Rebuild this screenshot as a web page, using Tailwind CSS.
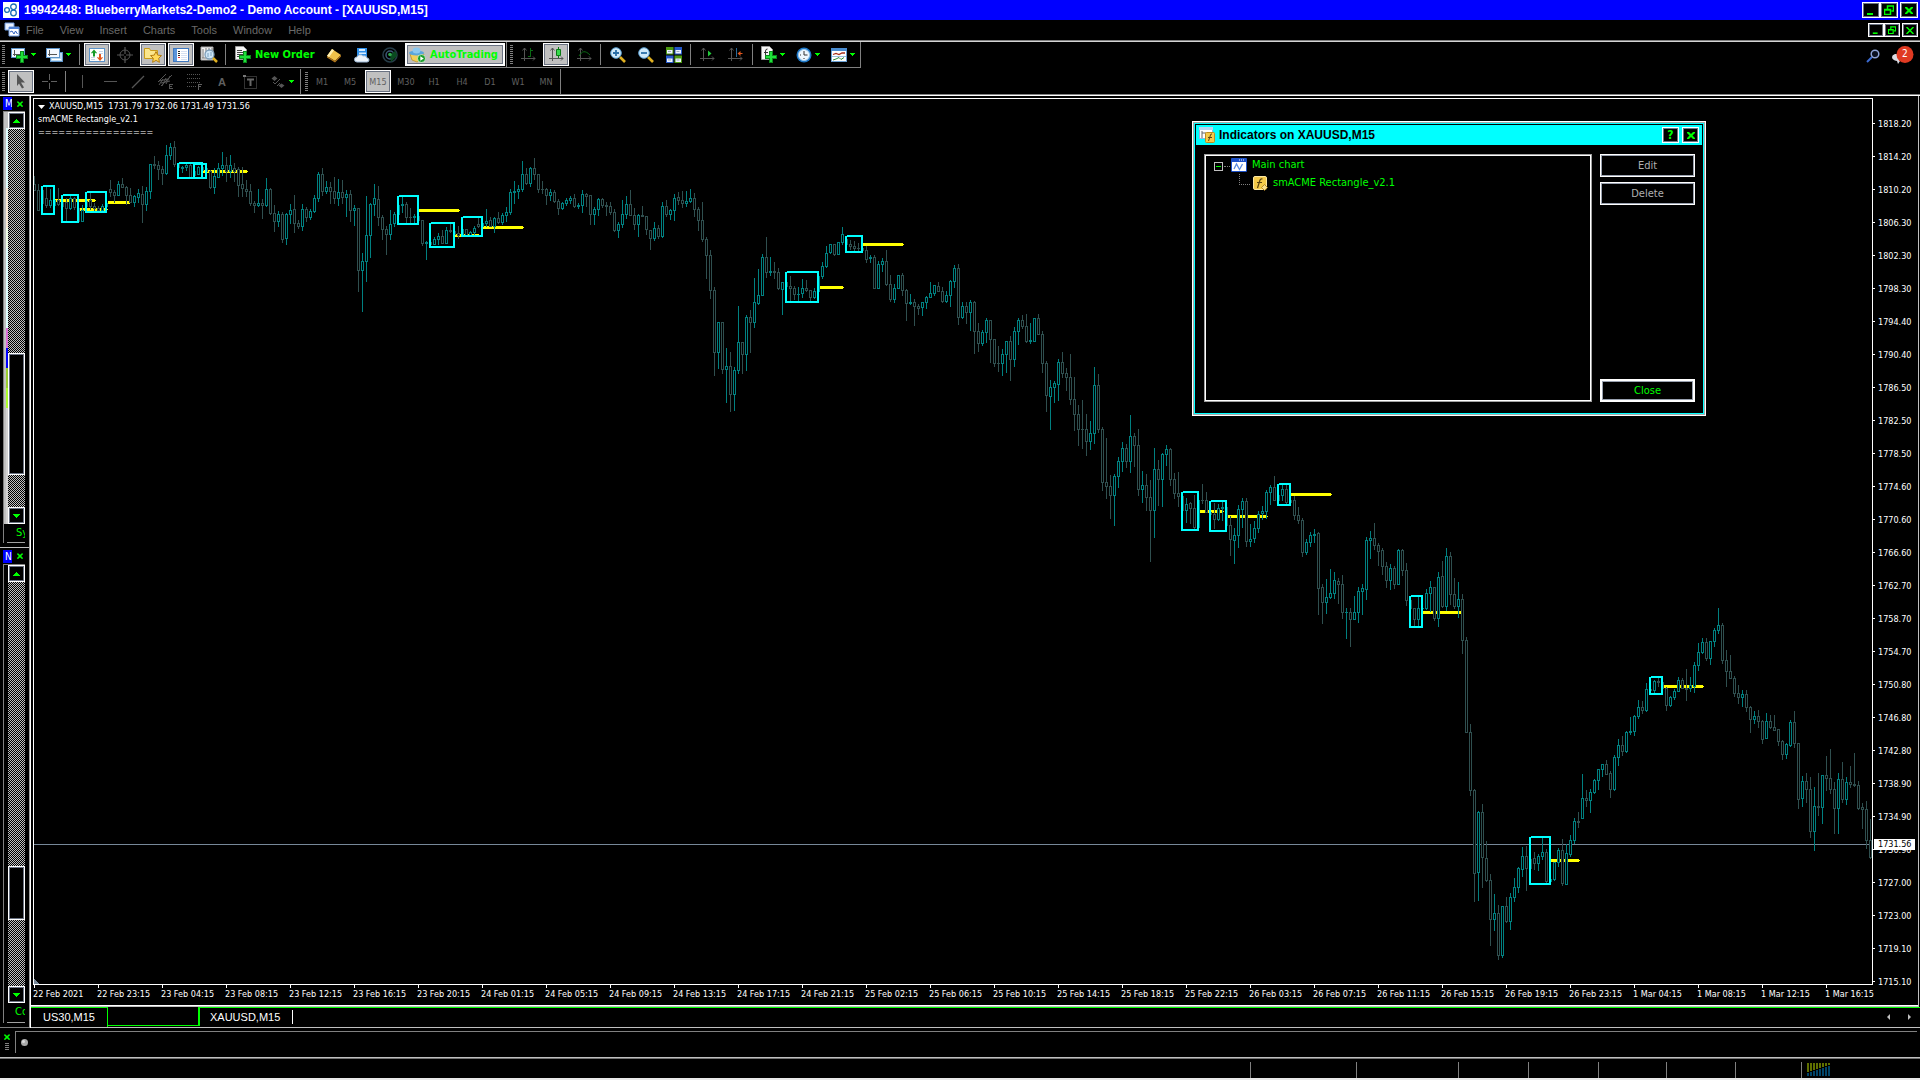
<!DOCTYPE html>
<html lang="en">
<head>
    <meta charset="UTF-8">
    <meta name="viewport" content="width=device-width, initial-scale=1.0">
    <title>19942448: BlueberryMarkets2-Demo2 - Demo Account - [XAUUSD,M15]</title>
    <script src="https://cdn.jsdelivr.net/npm/@tailwindcss/browser@4"></script>
</head>
<body class="relative h-screen flex flex-col overflow-hidden bg-black text-white font-['DejaVu_Sans_Condensed','DejaVu_Sans',sans-serif] text-[9px] leading-3">

    <!-- shared glyphs -->
    <svg class="hidden">
        <symbol id="g-drop" viewBox="0 0 5 3"><path d="M0 0h5v1h-1v1h-1v1h-1v-1h-1v-1h-1z" fill="#00ff00"/></symbol>
        <symbol id="g-up" viewBox="0 0 7 4"><path d="M3 0h1v1h1v1h1v1h1v1h-7v-1h1v-1h1v-1h1z" fill="#00ff00"/></symbol>
        <symbol id="g-down" viewBox="0 0 7 4"><path d="M0 0h7v1h-1v1h-1v1h-1v1h-1v-1h-1v-1h-1v-1h-1z" fill="#00ff00"/></symbol>
        <symbol id="g-x" viewBox="0 0 8 7"><path d="M0 0h2l2 2 2-2h2v1L5.500 3.500 8 6v1h-2l-2-2-2 2h-2v-1l2.500-2.500L0 1z" fill="#00ff00"/></symbol>
        <symbol id="g-min" viewBox="0 0 10 10"><path d="M1 8h6v2h-6z" fill="#00ff00"/></symbol>
        <symbol id="g-restore" viewBox="0 0 10 10"><path d="M3.500 4v-3h6v5h-2M3 1h7M.5 4.500h6v5h-6zM0 5h7" fill="none" stroke="#00ff00" stroke-width="1.500"/></symbol>
        <symbol id="g-axes" viewBox="0 0 15 15"><path d="M3.500 1v13M0 11.500h14M1.500 3.500l2-2.500 2 2.500M12 9.500l2 2-2 2" fill="none" stroke="#555" stroke-width="1"/></symbol>
        <symbol id="g-plus" viewBox="0 0 12 12"><path d="M4 0h4v4h4v4h-4v4h-4v-4h-4v-4h4z" fill="#0a8a1a"/><path d="M5 1h2v4h4v2h-4v4h-2v-4h-4v-2h4z" fill="#1fe03a"/></symbol>
    </svg>

    <header class="h-5 bg-[#0000ff] flex items-center px-[2px]">
        <svg class="w-4 h-4 mx-px" viewBox="0 0 16 16"><rect width="16" height="16" fill="#fff"/><g fill="none" stroke="#1d6fb8" stroke-width="1.300"><circle cx="10.500" cy="4.800" r="2.800"/><circle cx="4" cy="8" r="2.400"/><circle cx="10.500" cy="11" r="2.800"/></g></svg>
        <h1 class="ml-1 flex-1 font-['Liberation_Sans',sans-serif] font-bold text-[12px] leading-4">19942448: BlueberryMarkets2-Demo2 - Demo Account - [XAUUSD,M15]</h1>
        <button aria-label="Minimize" class="w-[18px] h-4 bg-black border border-white outline-1 -outline-offset-2 outline-gray-500 flex items-center justify-center"><svg class="w-[10px] h-[10px]"><use href="#g-min"/></svg></button>
        <button aria-label="Restore" class="w-[18px] h-4 bg-black border border-white outline-1 -outline-offset-2 outline-gray-500 flex items-center justify-center"><svg class="w-[10px] h-[10px]"><use href="#g-restore"/></svg></button>
        <button aria-label="Close" class="ml-[2px] w-[18px] h-4 bg-black border border-white outline-1 -outline-offset-2 outline-gray-500 flex items-center justify-center"><svg class="w-2 h-[7px]"><use href="#g-x"/></svg></button>
    </header>

    <nav class="h-5 flex items-center px-[2px] text-[#696969] font-['Liberation_Sans',sans-serif] text-[11px] leading-4">
        <svg class="w-4 h-4 ml-[2px]" viewBox="0 0 16 16"><path d="M1 1h9v7h-9z" fill="#eaf2ff" stroke="#6f9be0"/><path d="M5 5h10v9h-10z" fill="#fff" stroke="#6f9be0"/><path d="M5 5h10v2h-10z" fill="#4f83d8"/><path d="M6 10l2-1 2 3 1.500-3 2 3" fill="none" stroke="#2f62c0"/></svg>
        <a href="#" class="px-2 ml-[-2px]">File</a>
        <a href="#" class="px-2">View</a>
        <a href="#" class="px-2">Insert</a>
        <a href="#" class="px-2">Charts</a>
        <a href="#" class="px-2">Tools</a>
        <a href="#" class="px-2">Window</a>
        <a href="#" class="px-2">Help</a>
        <div class="ml-auto flex">
            <button aria-label="Minimize chart" class="w-4 h-[14px] bg-black border border-white outline-1 -outline-offset-2 outline-gray-500 flex items-center justify-center"><svg class="w-2 h-2"><use href="#g-min"/></svg></button>
            <button aria-label="Restore chart" class="w-4 h-[14px] bg-black border border-white outline-1 -outline-offset-2 outline-gray-500 flex items-center justify-center"><svg class="w-2 h-2"><use href="#g-restore"/></svg></button>
            <button aria-label="Close chart" class="ml-[2px] w-4 h-[14px] bg-black border border-white outline-1 -outline-offset-2 outline-gray-500 flex items-center justify-center"><svg class="w-2 h-[7px]" viewBox="0 0 8 7"><path d="M0.500 0l7 7M7.500 0l-7 7" stroke="#00ff00" stroke-width="1.500"/></svg></button>
        </div>
    </nav>

    <div class="border-t border-[#808080]">
        <div class="border-t border-[#d4d4d4] flex justify-between h-7">
            <!-- standard toolbar -->
            <div class="h-[26px] border-b border-r border-[#808080] flex items-center">
                <i class="w-[3px] h-5 ml-[2px] mr-[3px] bg-[repeating-linear-gradient(#808080_0_1px,#000_1px_2px)]"></i>
                <button aria-label="New chart" class="w-[35px] flex items-center gap-[3px] pl-[3px]">
                    <svg class="w-[17px] h-4" viewBox="0 0 17 16"><rect x=".5" y="1.500" width="13" height="9" fill="#f4f8ff" stroke="#5c93c9"/><path d="M3.500 3v6M2 7.500h9" stroke="#555"/><use href="#g-plus" x="5" y="4" width="12" height="12"/></svg>
                    <svg class="w-[5px] h-[3px]"><use href="#g-drop"/></svg>
                </button>
                <button aria-label="Profiles" class="w-[35px] flex items-center gap-[3px] pl-[3px]">
                    <svg class="w-[17px] h-4" viewBox="0 0 17 16"><rect x="4.500" y="5.500" width="12" height="9" fill="#bcd8ef" stroke="#5c93c9"/><rect x=".5" y="1.500" width="13" height="9" fill="#f4f8ff" stroke="#5c93c9"/><path d="M3.500 3v6M2 7.500h9" stroke="#555"/><path d="M6 12.500h9" stroke="#fff"/></svg>
                    <svg class="w-[5px] h-[3px]"><use href="#g-drop"/></svg>
                </button>
                <i class="w-px h-[21px] ml-px mr-[3px] bg-[#808080]"></i>
                <button aria-label="Market Watch" class="w-[26px] h-[23px] mx-px border border-white outline-1 -outline-offset-2 outline-gray-500 bg-[#c0c0c0] flex items-center justify-center">
                    <svg class="w-4 h-4" viewBox="0 0 16 16"><rect x=".5" y="1.500" width="15" height="13" fill="#fff" stroke="#5c93c9"/><path d="M10 4.500h4M10 6.500h4M2 10.500h4M2 12.500h4" stroke="#c8d4e8"/><path d="M5 2.500l3 3.500-1 .5-1-1v4h-2v-4l-1 1-1-.5z" fill="#159a28"/><path d="M11 14l3-3.500-1-.5-1 1v-4h-2v4l-1-1-1 .5z" fill="#e2561c"/></svg>
                </button>
                <button aria-label="Data Window" class="w-[26px] h-[23px] mx-px flex items-center justify-center">
                    <svg class="w-4 h-4" viewBox="0 0 16 16" fill="none" stroke="#555"><circle cx="8" cy="8" r="5"/><path d="M8 0v7M8 9v7M0 8h7M9 8h7" stroke-width="1.200"/></svg>
                </button>
                <button aria-label="Navigator" class="w-[26px] h-[23px] mx-px border border-white outline-1 -outline-offset-2 outline-gray-500 bg-[#c0c0c0] flex items-center justify-center">
                    <svg class="w-[18px] h-4" viewBox="0 0 18 16"><path d="M.5 1.500h5l1 2h7v8h-13z" fill="#fbe68c" stroke="#c99b1a"/><path d="M12 4.500l1.700 3.600 3.800.5-2.800 2.700.7 4-3.400-1.900-3.400 1.900.7-4-2.800-2.700 3.800-.5z" fill="#ffd95a" stroke="#b57d10"/></svg>
                </button>
                <button aria-label="Terminal" class="w-[26px] h-[23px] mx-px border border-white outline-1 -outline-offset-2 outline-gray-500 bg-[#c0c0c0] flex items-center justify-center">
                    <svg class="w-4 h-4" viewBox="0 0 16 16"><rect x=".5" y="1.500" width="15" height="13" fill="#fff" stroke="#3f78c0"/><path d="M1 2h3v12h-3z" fill="#5a94da"/><path d="M8 4.500h6M8 6.500h6M8 8.500h6M8 10.500h6M8 12.500h6" stroke="#d4e0f2"/><path d="M5 4h2v1h-2zM5 6h2v1h-2zM5 8h2v1h-2z" fill="#222"/><path d="M5 10h2v1h-2z" fill="#d33"/></svg>
                </button>
                <button aria-label="Strategy Tester" class="w-[26px] h-[23px] mx-px flex items-center justify-center">
                    <svg class="w-[18px] h-[17px]" viewBox="0 0 18 17"><path d="M1 1h12v13h-12z" fill="#f4f4f4" stroke="#aaa"/><path d="M3 3v9M6 2v4M9 2v3M12 2v3M2 12h5" stroke="#777"/><circle cx="9.500" cy="8.500" r="4.500" fill="#cfe6f7" stroke="#7d9db8" stroke-width="1.300"/><path d="M8 7v4M11 6v4" stroke="#7aa2c0"/><path d="M13 12l4 4" stroke="#e0b020" stroke-width="2.500"/></svg>
                </button>
                <i class="w-px h-[21px] mx-[2px] bg-[#808080]"></i>
                <button class="w-[92px] h-[23px] pl-[7px] flex items-center gap-1 text-[#00ff00] font-bold text-[11px] whitespace-nowrap">
                    <svg class="w-4 h-[17px] shrink-0" viewBox="0 0 16 17"><path d="M.5.5h8l3 3v10h-11z" fill="#f6f6f6" stroke="#999"/><path d="M2 4.500h5M2 6.500h7M2 8.500h7M2 10.500h5" stroke="#444"/><use href="#g-plus" x="4" y="5" width="12" height="12"/></svg>
                    New Order
                </button>
                <button aria-label="MetaEditor" class="w-[26px] h-[23px] mx-px flex items-center justify-center">
                    <svg class="w-4 h-4" viewBox="0 0 16 16"><path d="M1 9l5-7 9 6-6 6z" fill="#f0c24a"/><path d="M1 9l5-7 2 1.300-5 7z" fill="#fff0b0"/><path d="M1 9l8 5 6-6v1.500l-6 6-8-5z" fill="#b4761a"/></svg>
                </button>
                <button aria-label="Market" class="w-[26px] h-[23px] mx-px flex items-center justify-center">
                    <svg class="w-4 h-4" viewBox="0 0 16 16"><path d="M3 1h10v9h-10z" fill="#2f8fe8"/><path d="M5 2h6v2h-6zM5 5.500h7v1.500h-7z" fill="#d7ecff"/><path d="M3 15a2.500 2.500 0 0 1 0-5 3.500 3.500 0 0 1 6-1 3 3 0 0 1 4 2 2 2 0 0 1 0 4z" fill="#eef4fb" stroke="#9ab6d4"/></svg>
                </button>
                <button aria-label="Signals" class="w-[26px] h-[23px] mx-px flex items-center justify-center">
                    <svg class="w-4 h-4" viewBox="0 0 16 16" fill="none"><circle cx="8" cy="8" r="7" stroke="#263c48" stroke-width="1.500"/><circle cx="8" cy="8" r="4" stroke="#3c5878" stroke-width="1.500"/><path d="M8 8l5-4q2 2 2 5l-6 6z" fill="#0b4a20"/><circle cx="8" cy="7.500" r="1.800" fill="#2ea64c"/></svg>
                </button>
                <button class="w-[100px] h-[23px] mx-px pl-[2px] border-2 border-white outline-1 -outline-offset-3 outline-gray-500 bg-[#c0c0c0] flex items-center gap-1 text-[#00ff00] text-[11px] font-bold whitespace-nowrap">
                    <svg class="w-[17px] h-4 shrink-0" viewBox="0 0 17 16"><path d="M1 7h14l-3 6-4 2-5-2z" fill="#f3cf5a" stroke="#b98c1a" stroke-width=".7"/><ellipse cx="7.500" cy="6" rx="7.500" ry="2.500" fill="#5aa6dc"/><ellipse cx="7.500" cy="3.500" rx="4" ry="3" fill="#8cc8f0"/><circle cx="12.500" cy="11.500" r="4" fill="#1ba02c" stroke="#fff" stroke-width=".6"/><path d="M11.300 9.300l3.500 2.200-3.500 2.200z" fill="#fff"/></svg>
                    AutoTrading
                </button>
                <i class="w-px h-[25px] bg-[#808080]"></i>
                <i class="w-[3px] h-5 ml-[3px] mr-px bg-[repeating-linear-gradient(#808080_0_1px,#000_1px_2px)]"></i>
                <button aria-label="Bar chart" class="w-[26px] h-[23px] mx-px flex items-center justify-center">
                    <svg class="w-[15px] h-[15px]" viewBox="0 0 15 15"><use href="#g-axes"/><path d="M9.500 1v9M7 9.500h2M10 3.500h2" stroke="#0a6a14" fill="none"/></svg>
                </button>
                <button aria-label="Candlesticks" class="w-[26px] h-[23px] mx-px border border-white outline-1 -outline-offset-2 outline-gray-500 bg-[#c0c0c0] flex items-center justify-center">
                    <svg class="w-[15px] h-[15px]" viewBox="0 0 15 15"><use href="#g-axes"/><path d="M9.500 0v11" stroke="#0a7a14"/><path d="M7.500 2.500h4v6h-4z" fill="#35d84a" stroke="#0a7a14"/></svg>
                </button>
                <button aria-label="Line chart" class="w-[26px] h-[23px] mx-px flex items-center justify-center">
                    <svg class="w-[15px] h-[15px]" viewBox="0 0 15 15"><use href="#g-axes"/><path d="M2 9c3-5 6-6 11-1" stroke="#0a6a14" fill="none"/></svg>
                </button>
                <i class="w-px h-[21px] ml-[2px] mr-[3px] bg-[#808080]"></i>
                <button aria-label="Zoom in" class="w-[26px] h-[23px] mx-px flex items-center justify-center">
                    <svg class="w-4 h-4" viewBox="0 0 16 16"><path d="M10 10l5 5" stroke="#e0b020" stroke-width="2.600"/><circle cx="6" cy="6" r="5.300" fill="#cfe9fa" stroke="#5da2d4"/><path d="M6 3v6M3 6h6" stroke="#2a6fa8" stroke-width="1.800"/></svg>
                </button>
                <button aria-label="Zoom out" class="w-[26px] h-[23px] mx-px flex items-center justify-center">
                    <svg class="w-4 h-4" viewBox="0 0 16 16"><path d="M10 10l5 5" stroke="#e0b020" stroke-width="2.600"/><circle cx="6" cy="6" r="5.300" fill="#cfe9fa" stroke="#5da2d4"/><path d="M3 6h6" stroke="#2a6fa8" stroke-width="1.800"/></svg>
                </button>
                <button aria-label="Tile windows" class="w-[26px] h-[23px] mx-px flex items-center justify-center">
                    <svg class="w-4 h-4" viewBox="0 0 16 16"><path d="M0 0h7.500v7.500h-7.500zM8.500 8.500h7.500v7.500h-7.500z" fill="#4a9a10"/><path d="M8.500 0h7.500v7.500h-7.500zM0 8.500h7.500v7.500h-7.500z" fill="#2458c8"/><path d="M1 3h5.500v3.500h-5.500zM9.500 3h5.500v3.500h-5.500zM1 11.500h5.500v3.500h-5.500zM9.500 11.500h5.500v3.500h-5.500z" fill="#eef4ff"/><path d="M2 4.500h3M10.500 4.500h3M2 13h3M10.500 13h3" stroke="#9ab"/></svg>
                </button>
                <i class="w-px h-[21px] mx-[2px] bg-[#808080]"></i>
                <button aria-label="Auto scroll" class="w-[26px] h-[23px] mx-px flex items-center justify-center">
                    <svg class="w-[15px] h-[15px]" viewBox="0 0 15 15"><use href="#g-axes"/><path d="M8 3.500l3.500 3-3.500 3z" fill="#22c83a"/></svg>
                </button>
                <button aria-label="Chart shift" class="w-[26px] h-[23px] mx-px flex items-center justify-center">
                    <svg class="w-[15px] h-[15px]" viewBox="0 0 15 15"><use href="#g-axes"/><path d="M8.500 1v9" stroke="#2a6a9a"/><path d="M9.500 6.500l3-2.500v2h2v1h-2v2z" fill="#e2561c"/></svg>
                </button>
                <i class="w-px h-[21px] ml-[3px] mr-[5px] bg-[#808080]"></i>
                <button aria-label="Indicators" class="w-[35px] flex items-center gap-[3px] pl-[3px]">
                    <svg class="w-4 h-[17px]" viewBox="0 0 16 17"><path d="M.5.5h8l3 3v10h-11z" fill="#f6f6f6" stroke="#999"/><path d="M4.500 11v-6q0-2 2-2M3 6.500h4" fill="none" stroke="#333"/><use href="#g-plus" x="4" y="5" width="12" height="12"/></svg>
                    <svg class="w-[5px] h-[3px]"><use href="#g-drop"/></svg>
                </button>
                <button aria-label="Periods" class="w-[35px] flex items-center gap-[3px] pl-[3px]">
                    <svg class="w-4 h-4" viewBox="0 0 16 16"><circle cx="8" cy="8" r="7.500" fill="#1e78c8"/><circle cx="8" cy="8" r="5.600" fill="#eef6fc" stroke="#9cc8ec"/><path d="M8 4v4h3.500M4 8h1M8 11v1" stroke="#333" fill="none"/></svg>
                    <svg class="w-[5px] h-[3px]"><use href="#g-drop"/></svg>
                </button>
                <button aria-label="Templates" class="w-[32px] flex items-center gap-[3px] pl-[3px]">
                    <svg class="w-4 h-[14px]" viewBox="0 0 16 14"><rect x=".5" y=".5" width="15" height="13" fill="#fff" stroke="#6aa0d4"/><path d="M0 0h16v3h-16z" fill="#4a8cd0"/><path d="M2 6.500l3-1 3 1 3-1.500h3" stroke="#a8301c" fill="none" stroke-width="1.300"/><path d="M1 8.500h14" stroke="#9cc0e0"/><path d="M2 12l3-1 3-1.500 2 2 3-2" stroke="#2a8a34" fill="none"/></svg>
                    <svg class="w-[5px] h-[3px]"><use href="#g-drop"/></svg>
                </button>
            </div>
            <div class="flex items-center gap-[10px] pr-[6px]">
                <button aria-label="Search"><svg class="w-[14px] h-[14px]" viewBox="0 0 14 14"><path d="M1 13l5-5" stroke="#3a6ad0" stroke-width="2"/><circle cx="9" cy="5" r="3.800" fill="#0a1020" stroke="#8ea4d8" stroke-width="1.500"/></svg></button>
                <button aria-label="Notifications" class="relative w-6 h-[18px] mb-[2px]">
                    <svg class="w-6 h-[18px]" viewBox="0 0 24 18"><path d="M5 8h8v7h-3l-2 3-1-3q-5-1-5-4 0-2 3-3z" fill="#dcdce4"/><circle cx="15" cy="8.500" r="8.500" fill="#e03a22"/></svg>
                    <span class="absolute left-[12px] top-[2px] text-[10px]">2</span>
                </button>
            </div>
        </div>

        <!-- line studies and timeframes -->
        <div class="h-[27px] border-b border-white flex items-stretch text-[#606060]">
            <div class="flex items-center h-[26px] border-b border-[#808080] w-full">
                <i class="w-[3px] h-5 ml-[2px] mr-[2px] bg-[repeating-linear-gradient(#808080_0_1px,#000_1px_2px)]"></i>
                <button aria-label="Cursor" class="w-[26px] h-[23px] mx-px border border-white outline-1 -outline-offset-2 outline-gray-500 bg-[#c0c0c0] flex items-center justify-center"><svg class="w-[10px] h-[15px]" viewBox="0 0 10 15"><path d="M1 0l8 8.500h-4l3 5-2 1-3-5-2 2.500z" fill="#555"/></svg></button>
                <button aria-label="Crosshair" class="w-[26px] h-[23px] mx-px flex items-center justify-center"><svg class="w-[15px] h-[15px]" viewBox="0 0 15 15"><path d="M7.500 0v6M7.500 9v6M0 7.500h6M9 7.500h6" stroke="#606060"/></svg></button>
                <i class="w-px h-[21px] ml-[2px] mr-[2px] bg-[#808080]"></i>
                <button aria-label="Vertical line" class="w-[26px] h-[23px] mx-px flex items-center justify-center"><svg class="w-[15px] h-[15px]" viewBox="0 0 15 15"><path d="M7.500 1v13" stroke="#555"/></svg></button>
                <button aria-label="Horizontal line" class="w-[26px] h-[23px] mx-px flex items-center justify-center"><svg class="w-[15px] h-[15px]" viewBox="0 0 15 15"><path d="M1 7.500h13" stroke="#555"/></svg></button>
                <button aria-label="Trendline" class="w-[26px] h-[23px] mx-px flex items-center justify-center"><svg class="w-[15px] h-[15px]" viewBox="0 0 15 15"><path d="M1 14l12-12" stroke="#555" stroke-width="1.200"/></svg></button>
                <button aria-label="Equidistant channel" class="w-[26px] h-[23px] mx-px flex items-center justify-center"><svg class="w-4 h-[17px]" viewBox="0 0 16 17"><path d="M0 9l8-8M3 13l11-11M1 12l4-6M4 13l4-8M8 11l4-8M1 8l9-2M3 10l9-2M11.500 11v5M11 11.500h4M11 13.500h3M11 15.500h4" stroke="#555" fill="none"/></svg></button>
                <button aria-label="Fibonacci retracement" class="w-[26px] h-[23px] mx-px flex items-center justify-center"><svg class="w-4 h-[17px]" viewBox="0 0 16 17"><path d="M1 1.500h14M1 5.500h14M1 9.500h14M1 13.500h9" stroke="#555" stroke-dasharray="1 1"/><path d="M12.500 11v6M12 11.500h4M12 13.500h3" stroke="#606060"/></svg></button>
                <button aria-label="Text" class="w-[26px] h-[23px] mx-px font-['Liberation_Sans',sans-serif] text-[11px] font-bold">A</button>
                <button aria-label="Text label" class="w-[26px] h-[23px] mx-px flex items-center justify-center"><svg class="w-[14px] h-[14px]" viewBox="0 0 14 14"><rect x="1.500" y="1.500" width="12" height="12" fill="none" stroke="#666" stroke-dasharray="1 1"/><path d="M0 0h3v2h-3z" fill="#777"/><path d="M4 4.500h7M7.500 4v7" stroke="#666" stroke-width="2"/></svg></button>
                <button aria-label="Arrows" class="w-[35px] h-[23px] flex items-center gap-1 pl-[7px]"><svg class="w-[14px] h-[14px]" viewBox="0 0 14 14"><path d="M3.500 1l3 2.500-3 2.500-3-2.500zM10.500 13l3-2.500-3-2-3 2z" fill="#555"/><path d="M2 7l2 2 5-5M6 11l3-3" stroke="#555" fill="none"/></svg><svg class="w-[5px] h-[3px]"><use href="#g-drop"/></svg></button>
                <i class="w-px h-full ml-px bg-[#808080]"></i>
                <i class="w-[3px] h-5 ml-1 bg-[repeating-linear-gradient(#808080_0_1px,#000_1px_2px)]"></i>
                <button class="w-7 h-[23px]">M1</button>
                <button class="w-7 h-[23px]">M5</button>
                <button class="w-[26px] h-[23px] mx-px border border-white outline-1 -outline-offset-2 outline-gray-500 bg-[#c0c0c0]">M15</button>
                <button class="w-7 h-[23px]">M30</button>
                <button class="w-7 h-[23px]">H1</button>
                <button class="w-7 h-[23px]">H4</button>
                <button class="w-7 h-[23px]">D1</button>
                <button class="w-7 h-[23px]">W1</button>
                <button class="w-7 h-[23px]">MN</button>
                <i class="w-px h-full bg-[#808080]"></i>
            </div>
        </div>
    </div>

    <main class="flex-1 min-h-0 flex">
        <aside class="w-[30px] border-r border-[#a0a0a0] flex flex-col">
            <!-- market watch -->
            <section class="h-[452px] pl-[3px] flex flex-col border-b border-[#c0c0c0]">
                <div class="h-[15px] flex items-center">
                    <h2 class="w-[9px] h-[13px] bg-[#0000ff] pl-[2px] overflow-hidden text-[10px] leading-[13px]">M</h2>
                    <button aria-label="Close Market Watch" class="ml-[5px]"><svg class="w-[6px] h-[6px]"><use href="#g-x"/></svg></button>
                </div>
                <div class="w-[22px] flex-1 min-h-0 mb-1 border-t border-l border-[#808080] flex flex-col">
                    <div class="h-[412px] flex">
                        <div class="w-1 pt-4 flex flex-col items-end bg-[#c0c0c0]">
                            <i class="w-[2px] h-[60px] bg-[#e0ffff]"></i>
                            <i class="w-[2px] h-10 bg-[#faebd7]"></i>
                            <i class="w-[2px] h-5 bg-[#f0ffe8]"></i>
                            <i class="w-[2px] h-20 bg-[#e0ffff]"></i>
                            <i class="w-[2px] h-5 bg-[#da70d6]"></i>
                            <i class="w-[2px] h-5 bg-[#0000ff]"></i>
                            <i class="w-[2px] h-5 bg-[#9acd32]"></i>
                            <i class="w-[2px] h-5 bg-[#adff2f]"></i>
                            <i class="w-[2px] flex-1 bg-[#d3d3d3]"></i>
                        </div>
                        <div class="w-[17px] flex flex-col bg-[repeating-conic-gradient(#c0c0c0_0_25%,#000_0_50%)] bg-[length:2px_2px]">
                            <button aria-label="Scroll up" class="h-[17px] bg-black border border-white outline-1 -outline-offset-2 outline-gray-500 flex items-center justify-center"><svg class="w-[7px] h-1"><use href="#g-up"/></svg></button>
                            <div class="h-[224px]"></div>
                            <div class="h-[122px] bg-black border border-white outline-1 -outline-offset-2 outline-gray-500"></div>
                            <div class="flex-1"></div>
                            <button aria-label="Scroll down" class="h-[17px] bg-black border border-white outline-1 -outline-offset-2 outline-gray-500 flex items-center justify-center"><svg class="w-[7px] h-1"><use href="#g-down"/></svg></button>
                        </div>
                    </div>
                    <div class="flex-1 ml-[3px] pl-[9px] overflow-hidden border-b border-[#a0a0a0] text-[#00ff00] text-[11px] leading-[18px] whitespace-nowrap">Sy</div>
                </div>
            </section>
            <!-- navigator -->
            <section class="flex-1 min-h-0 pl-[3px] flex flex-col border-b border-[#808080]">
                <div class="h-4 flex items-center">
                    <h2 class="w-[9px] h-[13px] bg-[#0000ff] pl-[2px] overflow-hidden text-[10px] leading-[13px]">N</h2>
                    <button aria-label="Close Navigator" class="ml-[5px]"><svg class="w-[6px] h-[6px]"><use href="#g-x"/></svg></button>
                </div>
                <div class="w-[22px] flex-1 min-h-0 mb-1 border-t border-l border-[#808080] flex flex-col">
                    <div class="flex-1 ml-1 w-[17px] flex flex-col bg-[repeating-conic-gradient(#c0c0c0_0_25%,#000_0_50%)] bg-[length:2px_2px]">
                        <button aria-label="Scroll up" class="h-[17px] bg-black border border-white outline-1 -outline-offset-2 outline-gray-500 flex items-center justify-center"><svg class="w-[7px] h-1"><use href="#g-up"/></svg></button>
                        <div class="flex-1"></div>
                        <div class="h-[54px] bg-black border border-white outline-1 -outline-offset-2 outline-gray-500"></div>
                        <div class="h-[66px]"></div>
                        <button aria-label="Scroll down" class="h-[17px] bg-black border border-white outline-1 -outline-offset-2 outline-gray-500 flex items-center justify-center"><svg class="w-[7px] h-1"><use href="#g-down"/></svg></button>
                    </div>
                    <div class="h-5 ml-[3px] pl-2 overflow-hidden border-b border-[#a0a0a0] text-[#00ff00] text-[11px] leading-[18px] whitespace-nowrap">Co</div>
                </div>
            </section>
        </aside>

        <section class="flex-1 min-w-0 flex flex-col border-l border-white">
            <div class="flex-1 min-h-0 mr-px flex flex-col pt-[2px] pl-[2px] border-r border-b border-[#c0c0c0]">
                <div class="flex-1 min-h-0 flex">
                    <div class="relative flex-1 min-w-0 border border-white overflow-hidden">
                        <svg id="chart" class="w-full h-full" shape-rendering="crispEdges"></svg>
                        <div class="absolute left-[4px] top-px text-[9px] leading-[13px] whitespace-pre"><svg class="inline-block w-[7px] h-1 mr-1 align-middle" viewBox="0 0 7 4"><path d="M0 0h7l-3.500 4z" fill="#fff"/></svg>XAUUSD,M15  1731.79 1732.06 1731.49 1731.56
smACME Rectangle_v2.1
=================</div>
                    </div>
                    <div class="relative w-[45px]">
                        <ol id="price-axis" class="pt-[9px]"></ol>
                        <output class="absolute left-px top-[741px] w-[41px] h-[11px] pl-1 bg-white text-black leading-[11px]">1731.56</output>
                    </div>
                </div>
                <ol id="time-axis" class="h-5 flex overflow-hidden"></ol>
                <i class="h-px -ml-[2px] bg-white"></i>
            </div>
            <div class="h-[21px] flex font-['Liberation_Sans',sans-serif] text-[11px] leading-4 border-b border-[#c0c0c0]">
                <button class="w-[77px] pb-[2px] border-t border-r border-[#00ff00] text-center">US30,M15</button>
                <div class="w-[90px] h-[19px] border-b border-[#00ff00]"></div>
                <div class="flex-1 flex items-center pb-[2px] border-t border-[#00ff00]">
                    <i class="w-[2px] h-[18px] mr-[10px] bg-[#00ff00]"></i>
                    <button class="pr-3">XAUUSD,M15</button>
                    <i class="w-px h-[14px] bg-white"></i>
                    <div class="ml-auto mr-[9px] flex gap-4">
                        <button aria-label="Scroll tabs left"><svg class="w-1 h-[6px]" viewBox="0 0 4 6"><path d="M3 0v6L0 3z" fill="#c0c0c0"/></svg></button>
                        <button aria-label="Scroll tabs right"><svg class="w-1 h-[6px]" viewBox="0 0 4 6"><path d="M1 0v6l3-3z" fill="#c0c0c0"/></svg></button>
                    </div>
                </div>
            </div>
        </section>
    </main>

    <section class="h-[30px] pt-[3px] flex border-b border-[#c0c0c0]">
        <div class="w-[15px] pl-[4px] pt-[3px]">
            <button aria-label="Close Terminal" class="block"><svg class="w-[6px] h-[6px]"><use href="#g-x"/></svg></button>
            <i class="block w-1 h-[7px] mt-[3px] ml-px bg-[repeating-linear-gradient(#808080_0_1px,#000_1px_2px)]"></i>
        </div>
        <div class="flex-1 h-[22px] mr-[3px] pl-[5px] flex items-center border-t border-l border-[#808080]">
            <svg class="w-[7px] h-[7px]" viewBox="0 0 7 7"><circle cx="3.500" cy="3.500" r="3.500" fill="#aaa"/><circle cx="2.500" cy="2.500" r="1.500" fill="#ddd"/></svg>
        </div>
    </section>

    <footer class="h-[22px] pt-[3px] flex justify-end border-t border-[#707070] border-b-2 border-b-[#e8e8e8]">
        <i class="w-[106px] border-l border-[#808080]"></i>
        <i class="w-[102px] border-l border-[#808080]"></i>
        <i class="w-[70px] border-l border-[#808080]"></i>
        <i class="w-[70px] border-l border-[#808080]"></i>
        <i class="w-[68px] border-l border-[#808080]"></i>
        <i class="w-[69px] border-l border-[#808080]"></i>
        <i class="w-[66px] border-l border-[#808080]"></i>
        <div class="w-[119px] pl-[5px] border-l border-[#808080]">
            <svg class="w-6 h-[14px] mt-px" viewBox="0 0 24 14" shape-rendering="crispEdges"><path d="M0 0h2v9h-2zM3 0h2v8h-2zM6 0h2v7h-2zM9 0h2v6h-2zM12 0h2v5h-2zM15 0h2v4h-2zM18 0h2v3h-2zM21 0h2v2h-2z" fill="#5f7000"/><path d="M0 10h2v3h-2zM3 9h2v4h-2zM6 8h2v5h-2zM9 7h2v6h-2zM12 6h2v7h-2zM15 5h2v8h-2zM18 4h2v9h-2zM21 3h2v10h-2z" fill="#004368"/></svg>
        </div>
    </footer>

    <!-- indicators dialog -->
    <div role="dialog" aria-labelledby="dlg-title" class="absolute left-[1192px] top-[121px] w-[514px] h-[295px] border border-white bg-black">
        <div class="h-full border border-[#a8a8a8] flex"><div class="flex-1 border border-[#00ffff] p-px flex flex-col text-[11px] text-[#00ff00]">
            <div class="h-5 px-[3px] flex items-center bg-[#00ffff]">
                <svg class="w-4 h-4" viewBox="0 0 16 16"><rect x=".5" y=".5" width="13" height="11" fill="#fff" stroke="#8fb8e0"/><path d="M0 0h14v3h-14z" fill="#b8d4f0"/><path d="M3 4v7M3 6h4" stroke="#666"/><rect x="6.500" y="5.500" width="9" height="10" rx="1" fill="#f4ca4a" stroke="#c08c1c"/><path d="M9.500 14l2-6q.5-1.500 1.500-1M9 10.500h4" stroke="#5a4410" fill="none"/></svg>
                <h2 id="dlg-title" class="ml-1 flex-1 font-['Liberation_Sans',sans-serif] font-bold text-[12px] text-black">Indicators on XAUUSD,M15</h2>
                <button aria-label="Help" class="w-[17px] h-4 bg-black border border-white outline-1 -outline-offset-2 outline-gray-500 font-bold text-[12px] leading-3">?</button>
                <button aria-label="Close dialog" class="ml-[3px] w-[17px] h-4 bg-black border border-white outline-1 -outline-offset-2 outline-gray-500 flex items-center justify-center"><svg class="w-2 h-[7px]"><use href="#g-x"/></svg></button>
            </div>
            <div class="flex-1 flex gap-2 pt-[9px] pl-2 pr-[7px] pb-[10px]">
                <ul class="flex-1 border border-[#a0a0a0] outline-1 -outline-offset-2 outline-white pl-[9px] pt-px">
                    <li class="h-[18px] flex items-center">
                        <svg class="w-[9px] h-[9px] mt-[3px]" viewBox="0 0 9 9"><rect x=".5" y=".5" width="8" height="8" fill="#000" stroke="#c0c0c0"/><path d="M2 4.500h5" stroke="#00ff00"/></svg>
                        <i class="w-[6px] mx-px mt-[3px] border-t border-dotted border-[#808080]"></i>
                        <svg class="w-4 h-[14px]" viewBox="0 0 16 14"><rect width="16" height="14" rx="1" fill="#1c50c8"/><path d="M1 4h14v9h-14z" fill="#fff"/><path d="M8 2h1M10 2h1M12 2h1" stroke="#fff"/><path d="M3 11l2.500-5 3 5.500 3-5.500" fill="none" stroke="#5b8be0" stroke-width="1.300"/></svg>
                        <span class="ml-[5px]">Main chart</span>
                    </li>
                    <li class="h-[18px] flex items-center">
                        <i class="w-[11px] h-[11px] ml-[25px] mb-[7px] border-l border-b border-dotted border-[#808080]"></i>
                        <svg class="w-[15px] h-[15px] ml-[3px]" viewBox="0 0 15 15"><rect x=".5" y=".5" width="13" height="13" rx="1.500" fill="#f4ca4a" stroke="#fbe6a0"/><path d="M4.500 12l2.500-8q.6-1.500 2.500-1M4 6.500h5" stroke="#5a4410" stroke-width="1.200" fill="none"/><path d="M11.500 8.500l3 3-3 3-3-3z" fill="#fbe08a" stroke="#a87818" stroke-width=".8"/></svg>
                        <span class="ml-[5px]">smACME Rectangle_v2.1</span>
                    </li>
                </ul>
                <div class="w-[95px] flex flex-col gap-[5px]">
                    <button class="h-[23px] border border-white outline-1 -outline-offset-2 outline-gray-400 text-[#b0b0b0]">Edit</button>
                    <button class="h-[23px] border border-white outline-1 -outline-offset-2 outline-gray-400 text-[#b0b0b0]">Delete</button>
                    <button class="h-[23px] mt-auto border-2 border-white outline-1 -outline-offset-3 outline-gray-400">Close</button>
                </div>
            </div>
        </div></div>
    </div>

    <script>
        // --- AXES ---
        const prices = ['1818.20', '1814.20', '1810.20', '1806.30', '1802.30', '1798.30', '1794.40', '1790.40', '1786.50', '1782.50', '1778.50', '1774.60', '1770.60', '1766.60', '1762.70', '1758.70', '1754.70', '1750.80', '1746.80', '1742.80', '1738.90', '1734.90', '1730.90', '1727.00', '1723.00', '1719.10', '1715.10'];
        const times = ['22 Feb 2021', '22 Feb 23:15', '23 Feb 04:15', '23 Feb 08:15', '23 Feb 12:15', '23 Feb 16:15', '23 Feb 20:15', '24 Feb 01:15', '24 Feb 05:15', '24 Feb 09:15', '24 Feb 13:15', '24 Feb 17:15', '24 Feb 21:15', '25 Feb 02:15', '25 Feb 06:15', '25 Feb 10:15', '25 Feb 14:15', '25 Feb 18:15', '25 Feb 22:15', '26 Feb 03:15', '26 Feb 07:15', '26 Feb 11:15', '26 Feb 15:15', '26 Feb 19:15', '26 Feb 23:15', '1 Mar 04:15', '1 Mar 08:15', '1 Mar 12:15', '1 Mar 16:15'];

        document.getElementById('price-axis').innerHTML = prices.map(p =>
            `<li class="h-[33px] flex items-center gap-[3px]"><i class="w-[2px] h-px bg-white"></i>${p}</li>`).join('');
        document.getElementById('time-axis').innerHTML = times.map(t =>
            `<li class="w-16 shrink-0 whitespace-nowrap"><i class="block w-px h-[3px] ml-px bg-white"></i>${t}</li>`).join('');

        // --- CANDLES ---
        // u = up, d = down, then high, top, bottom, low in units of `step` below y
        const runs = [
            { x: 34, y: 90, step: 1 / 3, bars: 'd258,283,302,302 d283,300,360,362 d290,300,340,360 d290,325,346,354 u297,331,346,354 u300,330,345,350 d294,331,343,347 d325,336,350,352 d325,336,356,395 u315,325,356,360 d320,325,353,360 d320,356,395,395 u345,360,395,395 d330,335,350,360 d308,331,349,360 d338,349,356,362 d347,356,362,368 u342,349,362,368 u320,340,350,352 d270,297,307,320 d300,307,316,338 u274,283,316,318 d264,283,291,293 d288,291,316,345 d294,316,336,340 u315,320,336,352 u297,311,322,338 d288,313,342,398 u292,304,342,362 u222,222,304,326 d198,222,226,237 d213,226,237,270 d228,237,250,284 u165,195,250,254 u160,171,196,210 d153,171,224,230 d222,222,232,232 u228,232,236,250 u222,226,233,243 d222,226,262,264 d240,245,256,262 u228,232,254,256 d225,232,240,250 d230,235,245,250 d240,245,292,296 u235,260,292,312 u218,236,262,264 u186,226,236,258 d202,226,243,275 u195,227,243,264 d219,235,243,276 d232,237,286,320 d232,283,294,322 d270,297,303,320 d283,303,340,348 d333,340,347,368 u297,341,347,350 d327,341,345,388 u264,297,345,350 d295,297,370,374 d345,370,395,426 u364,373,395,410' },
            { x: 282, y: 150, step: 1 / 3, bars: 'd186,192,269,279 u189,192,266,285 u162,181,193,222 d135,178,220,249 d210,220,230,237 u162,178,230,243 d171,178,203,216 u177,184,203,210 u135,145,185,189 u66,73,146,156 d54,73,125,138 u93,112,125,132 d96,112,125,162 d81,124,146,162 u87,127,146,168 d90,127,143,162 u120,133,143,201 d120,133,182,216 u165,175,182,228 d175,175,361,426 u309,334,361,486 u138,256,334,396 u159,163,256,324 u102,145,163,198 d108,148,203,228 d195,202,238,270 d228,238,254,315 u180,223,254,270 u186,193,221,231 u165,165,193,193 u140,163,167,189 d156,163,203,220 d174,202,203,220 u192,199,203,222 d198,199,211,211 d211,211,281,288 u273,277,280,330 d277,277,283,290 u262,268,284,286 u249,259,268,285 d240,259,280,281 u231,241,280,281 d222,241,244,249 d243,244,252,260 d228,250,256,267 u238,238,256,258 d237,238,256,258 u243,248,256,258 u228,235,248,256 d204,223,230,235 u219,220,230,232 u177,214,220,230 d201,211,229,232 u200,205,229,249 d186,205,217,221 u189,196,217,225 u171,187,197,216 u117,127,188,195 u93,124,127,162 u105,118,124,147 u33,73,118,125 d54,73,101,105 u51,55,101,111 d24,55,73,90 d73,73,118,129 d93,118,118,132 d114,118,136,165 u117,127,136,153 d120,127,154,159 d147,154,176,195 u156,160,176,180 u144,151,160,168 u138,145,152,162 d132,145,170,174 u160,167,170,177 u120,133,166,189 d129,133,139,171 d136,136,193,225 u171,178,193,225 u144,148,178,198 d144,148,167,174 d156,167,170,198 d156,169,187,195 d177,187,242,246 u216,223,242,264 u150,193,223,234 u138,163,193,207 d120,163,196,198 d174,196,224,240 u192,196,224,261 d168,196,199,201 d199,199,239,255 d239,241,266,300 u216,235,266,273 d225,235,260,267 u156,169,260,264 d150,169,193,201 u177,181,193,210 u132,145,181,213 d126,142,151,165 d123,151,160,174 u123,154,160,171 u117,145,155,160 d129,145,178,201 d171,178,211,243' },
            { x: 702, y: 200, step: 1 / 3, bars: 'd6,61,118,126 d111,118,166,237 d150,166,271,297 d261,271,457,528 u367,367,457,507 d367,367,508,522 u444,499,508,609 d456,499,584,636 u501,511,584,633 u318,427,511,522 d427,427,463,522 u345,352,463,513 d330,352,367,459 u234,307,367,384 u207,286,311,315 u162,172,286,288 d111,172,217,234 u171,214,217,228 d186,214,217,237 d204,217,266,270 u247,247,268,345 d247,247,260,260 d228,259,265,303 d258,265,283,300 u261,283,284,303 u237,265,280,294 d240,265,271,276 d271,271,293,303 u264,274,293,297 u229,229,274,274 u186,199,230,237 u138,160,199,204 u133,133,158,162 d133,133,163,168 u127,127,163,164 u81,103,127,135 d118,118,133,133 d120,133,140,150 d123,139,145,153 d129,145,146,153 d145,145,151,151 d138,151,179,189 u165,172,176,189 d165,172,265,266 u183,193,265,266 u174,184,193,216 d150,184,254,258 d225,253,298,306 u252,265,298,309 u226,226,265,266 d219,226,271,288 d267,271,310,363 u282,307,311,316 d297,307,320,378 d312,319,325,345 u307,307,322,348 u288,292,307,327 u246,280,292,293 u256,256,280,288 d246,259,274,275 d261,274,305,308 u273,286,305,309 u240,244,286,321 u195,205,244,264 d192,205,352,375 u306,319,352,357 d306,319,338,372 u300,307,338,393 d303,307,394,462 d369,394,430,456 u390,397,430,438 u354,361,397,429 d361,361,418,489 d418,418,490,501 d438,490,491,516 u447,463,490,528 u424,424,463,519 d408,424,478,543 u381,394,478,501 u354,361,394,435 d345,361,379,387 d342,379,424,429 u369,421,424,432 u355,355,424,425 d342,355,403,405 d393,403,490,519 d483,490,586,636 u540,562,589,690 u543,550,562,609 u477,487,553,603 d456,487,520,534 d504,520,532,573 d462,532,598,615 d531,598,643,693 d615,643,688,738 d600,688,689,747 d642,688,724,768 u663,700,724,750 u501,556,700,732 d522,556,688,699' },
            { x: 1102, y: 400, step: 5 / 14, bars: 'd76,82,231,255 d106,231,242,277 d210,242,268,333 u207,214,268,353 u160,172,214,246 u118,135,172,202 d123,135,172,190 u42,102,172,204 d92,102,127,188 d81,127,250,269 u199,239,250,288 d207,239,273,311 d224,273,310,454 u134,194,310,386 d168,194,222,297 u148,152,222,300 u126,138,152,185 d134,138,222,241 d204,222,261,277 d202,261,270,300 d270,270,309,309 u274,292,309,344 d286,290,303,347 d266,303,357,362 u281,281,357,357 d235,280,282,291 d258,281,314,315 d314,314,320,350 d289,320,334,361 u290,303,335,339 u285,300,303,339 d300,300,352,352 d326,350,391,437 u358,379,393,459 u294,306,379,414 u274,284,306,358 d274,284,397,412 u347,390,397,412 u339,359,387,400 u311,320,359,372 u297,312,318,336 u252,258,312,332 u238,245,258,294 d213,245,281,283 d266,266,281,283 u238,250,268,283 d238,250,286,290 d280,280,286,290 d268,281,323,336 d300,323,337,347 d331,337,427,440 u389,399,427,434 u370,379,399,412 u361,376,379,400 d370,373,527,602 d515,525,567,627 u501,553,567,599 u473,541,553,557 u482,505,541,557 d498,508,516,571 d490,516,595,613 u582,595,596,669 d582,595,615,692 u549,595,615,616 u524,536,595,624 u515,527,536,602 u384,393,530,560 u367,387,393,445 d344,387,407,420 d400,407,424,465 d415,421,466,490 d454,466,506,526 u459,471,506,532 d465,471,516,529 u418,421,516,518 d417,421,477,493 d456,477,562,577 d560,560,584,584 d583,583,614,632 u550,583,614,632 u583,583,584,584 u530,541,583,588 u507,525,541,594 d525,525,611,619 u482,497,611,636 d451,494,579,582 u414,438,578,592 d426,438,545,574 d498,545,579,585 u510,558,578,610 d543,558,673,711 d664,673,931,932 d907,931,1093,1109 d1089,1093,1325,1406 u1151,1155,1323,1403 d1131,1155,1281,1366 d1235,1283,1345,1350 d1327,1345,1455,1529 u1383,1437,1455,1487 d1414,1437,1556,1568' },
            { x: 1502, y: 560, step: 1 / 3, bars: 'u1039,1039,1186,1193 d1011,1039,1084,1088 u999,1012,1084,1110 u954,982,1013,1025 u922,925,982,999 u861,889,928,951 d858,889,925,993 d898,898,926,926 d877,895,910,930 u882,889,910,933 u834,877,889,900 d867,877,965,968 u958,958,964,968 u907,907,958,963 u864,871,907,921 d837,871,970,978 u852,880,973,974 u825,841,883,890 u774,784,841,852 d756,784,787,804 u642,715,775,776 d690,715,721,741 u687,697,721,758 u657,661,697,702 u628,628,661,690 u613,613,628,651 d600,613,643,645 d633,640,688,714 u585,592,688,693 u537,556,592,618 d528,556,574,588 u514,517,574,579 u471,514,517,525 u465,469,514,528 u420,442,469,477 d423,442,452,462 u369,388,452,456 d388,388,391,391 u360,364,391,400 d354,364,367,380 d367,367,385,385 d381,385,436,453 u408,412,436,441 u388,394,412,420 u351,361,394,396 d354,361,384,387 d327,384,387,423 u351,376,385,396 u306,316,378,399 u249,277,316,333 u234,247,278,282 d234,247,296,303 u244,244,296,315 u204,211,244,261 u144,196,211,222 d189,196,301,312 d270,301,334,381 d285,334,355,357 d348,355,400,411 d375,400,412,432 u390,403,412,441 d390,403,442,456 d438,442,478,519 u453,469,478,492 d450,469,485,504 d480,484,538,552 u459,484,535,537 d465,484,502,507 d465,502,511,513 d508,508,544,558 d540,544,583,600 u549,553,583,597 u480,487,556,561 d453,487,550,564 d550,550,718,747 u648,664,715,741 d639,664,688,729 d651,688,814,834 u681,739,814,873 d639,739,742,768 u645,646,742,792 d588,646,655,693 d567,655,688,702 d666,688,745,822 u639,658,745,822 d606,658,718,729 u651,667,718,735 d618,667,673,684 d579,673,677,680 d663,676,745,750 d729,742,748,807 d723,748,841,867 d777,841,893,897' }
        ];

        // x1, y, x2 of each level line (3px thick)
        const levels = [[55, 199, 95], [80, 208, 107], [108, 201, 130], [203, 170, 247], [419, 209, 459], [455, 234, 479], [483, 226, 523], [820, 286, 843], [863, 243, 903], [1200, 510, 1223], [1228, 515, 1267], [1291, 493, 1331], [1423, 611, 1461], [1551, 859, 1579], [1664, 685, 1703]];

        // left, top, right, bottom of each range box
        const boxes = [[41, 185, 55, 215], [61, 194, 79, 223], [85, 191, 107, 213], [177, 162, 203, 179], [193, 163, 207, 179], [397, 195, 419, 225], [429, 222, 455, 248], [461, 216, 483, 237], [785, 271, 819, 303], [845, 235, 863, 253], [1181, 491, 1199, 531], [1209, 500, 1227, 532], [1277, 483, 1291, 506], [1409, 595, 1423, 628], [1529, 836, 1551, 885], [1649, 676, 1663, 695]];

        const rect = (x, y, w, h, fill) => `<rect x="${x}" y="${y}" width="${w}" height="${h}" fill="${fill}"/>`;
        let out = '';

        levels.forEach(([x1, y, x2]) => {
            out += rect(x1, y, x2 - x1, 3, '#ffff00') + rect(x2, y + 1, 1, 1, '#ffff00');
        });

        out += rect(34, 844, 1838, 1, '#778899');

        runs.forEach(run => {
            run.bars.split(' ').forEach((bar, i) => {
                const color = bar[0] === 'u' ? '#008080' : '#2f4f4f';
                const [high, top, bottom, low] = bar.slice(1).split(',').map(Number);
                const x = run.x + i * 4;
                const px = v => Math.round(run.y + v * run.step);
                const t = Math.floor(run.y + top * run.step);
                const b = Math.floor(run.y + bottom * run.step);
                out += rect(x, px(high), 1, Math.max(1, px(low) - px(high)), color);
                out += rect(x - 1, t, 3, b - t + 1, color);
                if (b - t > 1) out += rect(x, t + 1, 1, b - t - 1, '#000');
            });
        });

        boxes.forEach(([l, t, r, b]) => {
            out += rect(l + 2, t, r - l - 2, 2, '#00ffff') + rect(l, t + 1, 2, b - t - 1, '#00ffff')
                + rect(r - 2, t, 2, b - t, '#00ffff') + rect(l, b - 2, r - l, 2, '#00ffff');
        });

        out += '<path d="M34 979l5 5h-5z" fill="#778899"/>';

        // coordinates above are window based, the plot starts at 34,99
        document.getElementById('chart').innerHTML = `<g transform="translate(-34 -99)">${out}</g>`;
    </script>
</body>
</html>
